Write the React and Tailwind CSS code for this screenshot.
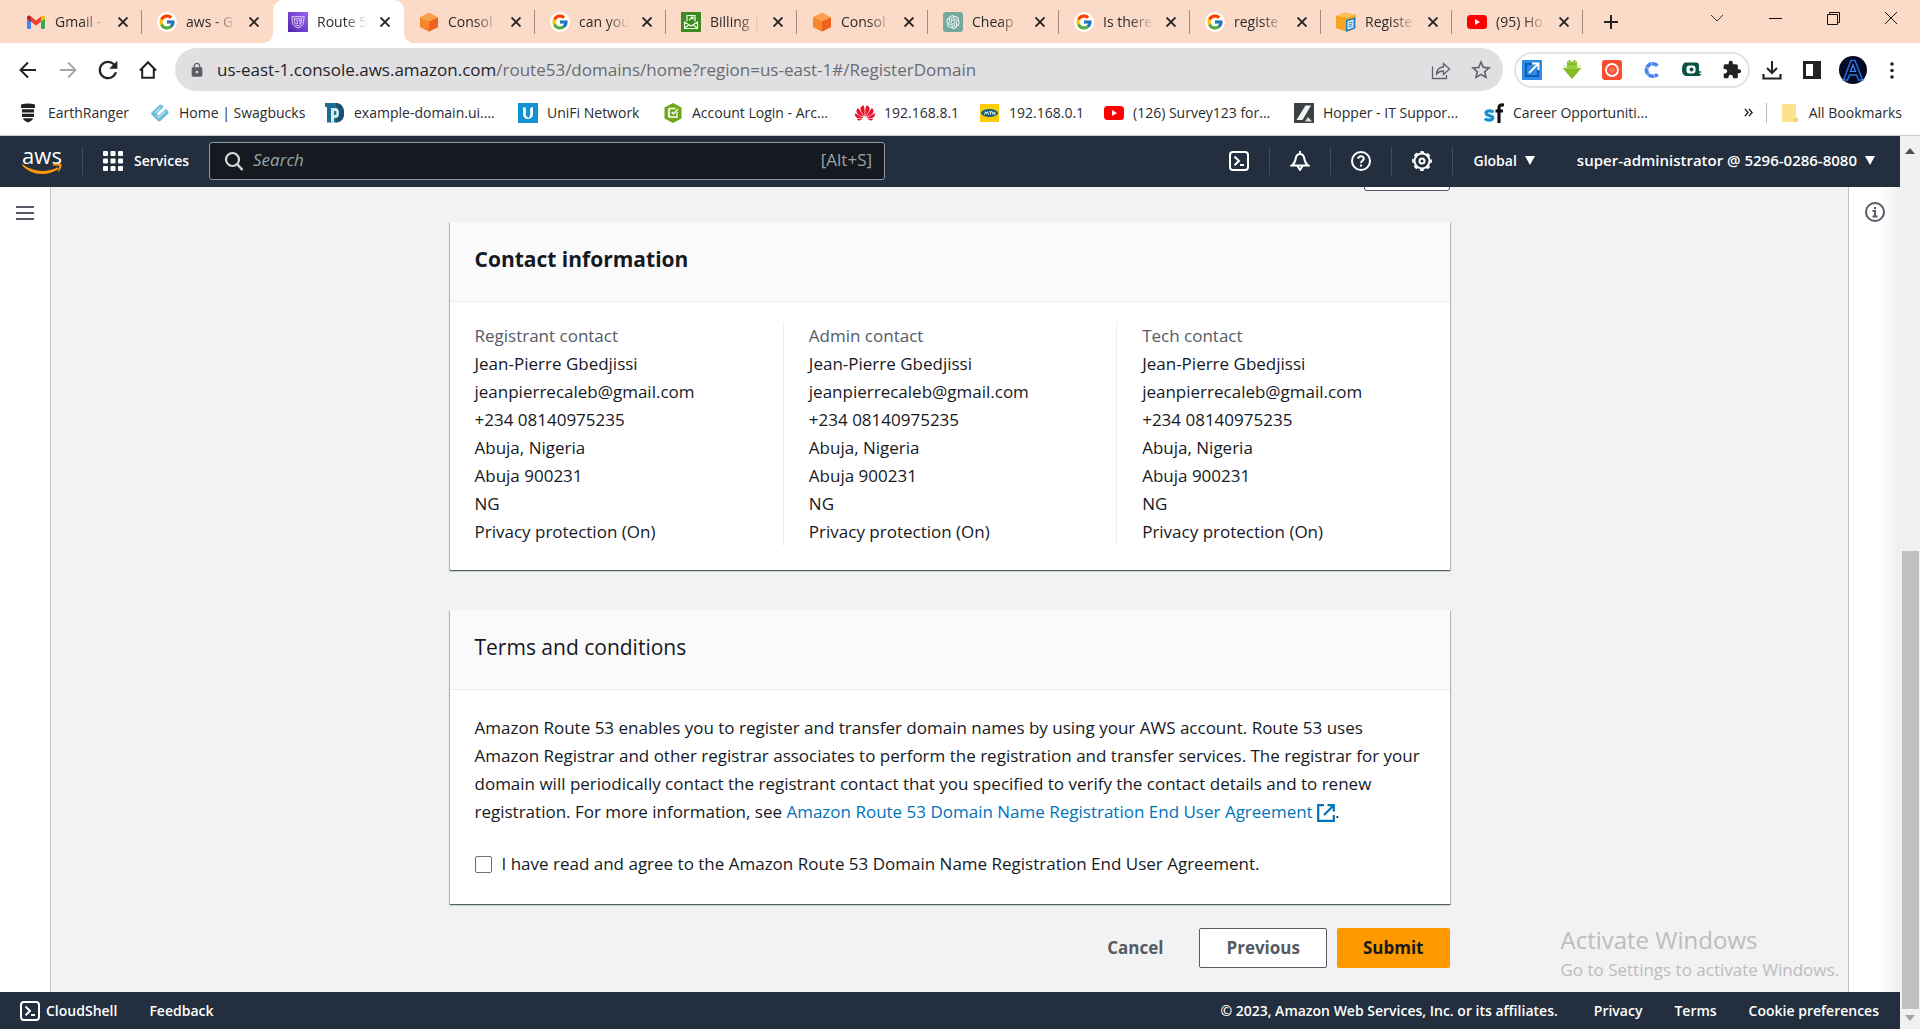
import React from "react";
import { FcGoogle } from "react-icons/fc";
import { RiOpenaiFill } from "react-icons/ri";
import { SiHuawei } from "react-icons/si";
import { MdExtension, MdLock, MdRefresh, MdStarBorder } from "react-icons/md";

/* ---------- favicons and small drawings ---------- */

function GmailIcon() {
  return (
    <svg viewBox="0 0 20 20" className="size-5">
      <path d="M1 5v10.500c0 .8.6 1.500 1.500 1.500H5V8.500z" fill="#4285f4" />
      <path d="M19 5v10.500c0 .8-.6 1.500-1.500 1.500H15V8.500z" fill="#34a853" />
      <path d="M5 4.500v5.200l5 3.800 5-3.800V4.500l-5 3.900z" fill="#ea4335" />
      <path d="M1 5.300v1.400l4 3V4.500l-.8-.6C2.800 2.900 1 3.800 1 5.300z" fill="#c5221f" />
      <path d="M19 5.300v1.400l-4 3V4.500l.8-.6c1.400-1 3.200-.1 3.200 1.400z" fill="#fbbc04" />
    </svg>
  );
}

function GoogleIcon() {
  return (
    <span className="flex size-5 items-center justify-center rounded-full bg-white">
      <FcGoogle className="size-[18px]" />
    </span>
  );
}

function RouteIcon() {
  return (
    <svg viewBox="0 0 20 20" className="size-5">
      <defs>
        <linearGradient id="route-bg" x1="0" y1="1" x2="1" y2="0">
          <stop offset="0" stopColor="#4d27a8" />
          <stop offset="1" stopColor="#9a60f5" />
        </linearGradient>
      </defs>
      <rect width="20" height="20" fill="url(#route-bg)" />
      <g fill="none" stroke="#e9dcff" strokeWidth="1">
        <path d="M4 4.500c1.500.8 2.800.6 3.800-.3L10 5l2.200-.8c1 .9 2.300 1.100 3.800.3.600 2-.6 2.800-.4 5 .2 3.500-2.600 5-5.600 6.500-3-1.500-5.800-3-5.600-6.500.2-2.200-1-3-.4-5z" />
        <path d="M6.500 6.700c2 .2 5 .2 7 0-.3 2 0 4-.6 5-.8 1-1.900 1.700-2.900 2.300-1-.6-2.100-1.300-2.900-2.300-.6-1-.3-3-.6-5z" />
        <path d="M8 8.500h1.500v3H8M11 8.500h1.500L11.500 10c1.500 0 1.200 1.700-.4 1.500" strokeWidth=".8" />
      </g>
    </svg>
  );
}

function CubeIcon() {
  return (
    <svg viewBox="0 0 20 20" className="size-5">
      <path d="M10 .8l9 4.600v9.500l-9 4.600-9-4.600V5.400z" fill="#f58536" />
      <path d="M10 .8l9 4.600-9 4.400-9-4.400z" fill="#f9a04b" />
      <path d="M10 9.800v9.700l9-4.600V5.400z" fill="#f0601f" />
      <path d="M1 5.400l9 4.400v9.700l-9-4.600z" fill="#f7872a" />
    </svg>
  );
}

function BillingIcon() {
  return (
    <svg viewBox="0 0 20 20" className="size-5">
      <rect width="20" height="20" fill="#3c8a20" />
      <g fill="none" stroke="#eaffdf" strokeWidth="1.200">
        <path d="M6 9.500V3.500h8v6M8 8l4-3M9.500 5H12v2.400" />
        <path d="M3.500 10v6.500h13V10L10 14zM3.500 16.500l4.500-4M16.500 16.500l-4.500-4" />
      </g>
    </svg>
  );
}

function ChatIcon() {
  return (
    <span className="flex size-5 items-center justify-center rounded-[3px] bg-[#75a99c] text-white">
      <RiOpenaiFill className="size-4" />
    </span>
  );
}

function RegisterIcon() {
  return (
    <svg viewBox="0 0 20 20" className="size-5">
      <path d="M0 4l9-3.500L20 3v13l-9 3.500L0 16z" fill="#f2a71b" />
      <path d="M0 4l9-3.500L20 3l-9 3z" fill="#f8c45c" />
      <path d="M11 6v13.500L0 16V4z" fill="#f5a623" />
      <path d="M10 8l9-2.500v11L10 20z" fill="#1d7fc0" />
      <path d="M11.500 9.300l6-1.700v7.800l-6 2.200z" fill="#e9f5fc" />
      <path d="M12.500 11l4-1.200M12.500 13l4-1.200M12.500 15l4-1.300" stroke="#1d7fc0" strokeWidth="1" />
    </svg>
  );
}

function YoutubeIcon() {
  return (
    <svg viewBox="0 0 20 20" className="size-5">
      <rect y="3" width="20" height="14" rx="3.500" fill="#ff0000" />
      <path d="M8 7v6l5-3z" fill="#fff" />
    </svg>
  );
}

function RangerIcon() {
  return (
    <svg viewBox="0 0 20 20" className="size-5">
      <path d="M2 1.500C7 .2 11 .2 16 1.500V5H2z" fill="#222" />
      <path d="M3 6.200h12v3.300H3zM3 10.800h12v3.300H3zM4 15.300h10c0 1.800-3 3.200-5 4.200-2-1-5-2.400-5-4.200z" fill="#222" />
    </svg>
  );
}

function SwagIcon() {
  return (
    <svg viewBox="0 0 20 20" className="size-5">
      <path d="M10 1.500L1.800 9.200c-1 1-1 1.800 0 2.700l6 5.800c1 1 2 1 3 0l7-6.700c1-1 1-2.200 0-3.200l-2-1.900-7 6.800-2.200-2.100L13.500 4l-1.500-2z" fill="#6fbdd8" />
      <path d="M5 9.800l5.500-5.200M6.500 12.500l2.300 2.200 6.500-6.200" stroke="#e9f7fb" strokeWidth="1" fill="none" />
    </svg>
  );
}

function DomainIcon() {
  return (
    <svg viewBox="0 0 20 20" className="size-5">
      <path d="M0 0h10c6 0 9 4 9 10s-3 9.500-9 9.500H2V4H0z" fill="#1c6d8f" />
      <path d="M11 0c5 0 8 4 8 10s-3 9.500-8 9.500z" fill="#175273" />
      <path d="M6 5h4.500c2.500 0 3.500 2 3.500 5s-1 5-3.500 5H9v4.500H6z" fill="#cdeef5" />
      <path d="M9 8h1.300c.7 0 1 .8 1 2s-.3 2-1 2H9z" fill="#1c6d8f" />
    </svg>
  );
}

function UnifiIcon() {
  return (
    <svg viewBox="0 0 20 20" className="size-5">
      <rect width="20" height="20" fill="#0f93d2" />
      <path d="M5 4.500h2.800V11c0 1.800.8 3 2.200 3.300V16C6.800 15.800 5 14 5 11z" fill="#fff" />
      <path d="M15 4v7c0 3-1.800 4.800-5 5-1 0-1.700-.2-2.500-.6 3 .3 4.700-1.400 4.700-4.400V5z" fill="#fff" />
    </svg>
  );
}

function SurveyIcon() {
  return (
    <svg viewBox="0 0 20 20" className="size-5">
      <path d="M10 0l8.500 4.500v11L10 20l-8.500-4.500v-11z" fill="#6fa516" />
      <path d="M14 9v5H6V5.500h6.500M4.800 7.500h2.400M4.800 10h2.400M4.800 12.500h2.400M8.800 9l1.700 2 4.500-5" stroke="#fff" strokeWidth="1.300" fill="none" />
    </svg>
  );
}

function MtnIcon() {
  return (
    <svg viewBox="0 0 20 20" className="size-5">
      <rect x="0" y="1" width="19" height="18" fill="#fdcb04" />
      <ellipse cx="9.500" cy="10" rx="8.500" ry="4" fill="#12607c" />
      <path d="M4.500 11.700l1-3 1 2 1-2 1 3M9 8.800h3M10.500 8.800v2.900M12.800 11.700v-2.900l2 2.900V8.800" stroke="#fff" strokeWidth=".9" fill="none" />
    </svg>
  );
}

function HopperIcon() {
  return (
    <svg viewBox="0 0 20 20" className="size-5">
      <rect width="20" height="20" fill="#3b4043" />
      <path d="M11.500 2.500h5.500L8.500 17H2.500z" fill="#f4f4f4" />
      <path d="M14 14l4 4.500h-7z" fill="#d9dde0" />
    </svg>
  );
}

function CareerIcon() {
  return (
    <svg viewBox="0 0 20 20" className="size-5">
      <path d="M9.500 9.200C7 7.200 2 7.500 2 10.200c0 3 6.800 1.800 6.800 4.600C8.800 17.800 3 17.700.8 15.600" fill="none" stroke="#1593cf" strokeWidth="3.200" />
      <path d="M15 20V5c0-2.600 1.500-3.500 5-3M11.500 8h7.500" fill="none" stroke="#111" strokeWidth="3.200" />
    </svg>
  );
}

function FolderIcon() {
  return (
    <svg viewBox="0 0 20 20" className="size-5">
      <path d="M2 1h14v13l2 1v4H2z" fill="#fbe38e" />
      <path d="M14 15h4v4h-5z" fill="#f3d36b" />
    </svg>
  );
}

function TerminalIcon() {
  return (
    <svg viewBox="0 0 20 20" fill="none" stroke="currentColor" strokeWidth="2" className="size-5">
      <rect x="1" y="1" width="18" height="18" rx="3" />
      <path d="M5.500 5.500L10 10l-4.500 4.200M11 14h4" />
    </svg>
  );
}

function CaretIcon() {
  return (
    <svg viewBox="0 0 10 9" className="h-[9px] w-[10px]" aria-hidden="true">
      <path d="M0 0h10L5 9z" fill="currentColor" />
    </svg>
  );
}

function CrossIcon() {
  return (
    <svg viewBox="0 0 10 10" className="size-[10px]" aria-hidden="true">
      <path d="M.5.5l9 9M9.500.5l-9 9" stroke="#222" strokeWidth="1.900" />
    </svg>
  );
}

/* ---------- browser chrome ---------- */

const tabs = [
  { title: "Gmail -", icon: <GmailIcon /> },
  { title: "aws - G", icon: <GoogleIcon />, bare: true },
  { title: "Route 5", icon: <RouteIcon />, active: true },
  { title: "Consol", icon: <CubeIcon /> },
  { title: "can you", icon: <GoogleIcon /> },
  { title: "Billing |", icon: <BillingIcon /> },
  { title: "Consol", icon: <CubeIcon /> },
  { title: "Cheap", icon: <ChatIcon /> },
  { title: "Is there", icon: <GoogleIcon /> },
  { title: "registe", icon: <GoogleIcon /> },
  { title: "Registe", icon: <RegisterIcon /> },
  { title: "(95) Ho", icon: <YoutubeIcon /> },
];

function Tab({ tab }) {
  return (
    <div
      role="tab"
      aria-selected={!!tab.active}
      className={
        tab.active
          ? "relative flex w-[131px] shrink-0 items-center rounded-t-[10px] bg-white pl-[15px]"
          : "relative flex w-[131px] shrink-0 items-center pl-[15px]"
      }
    >
      {tab.active && (
        <>
          <span className="absolute bottom-0 -left-[10px] size-[10px] bg-[radial-gradient(circle_at_top_left,#fcdac8_10px,#fff_10px)]" />
          <span className="absolute -right-[10px] bottom-0 size-[10px] bg-[radial-gradient(circle_at_top_right,#fcdac8_10px,#fff_10px)]" />
        </>
      )}
      {tab.icon}
      <span className="ml-[9px] w-[50px] overflow-hidden text-sm whitespace-nowrap text-[#2c2a29] [mask-image:linear-gradient(to_right,black_55%,transparent)]">
        {tab.title}
      </span>
      <button aria-label="Close tab" className="ml-[13px]">
        <CrossIcon />
      </button>
      {!tab.active && !tab.bare && <span className="absolute right-0 h-6 w-px bg-[#a08b80]" />}
    </div>
  );
}

function TabStrip() {
  return (
    <div className="flex h-[43px] shrink-0 bg-[#fcdac8] pl-[11px]">
      <div role="tablist" className="flex">
        {tabs.map((tab, i) => (
          <Tab key={i} tab={tab} />
        ))}
      </div>
      <button aria-label="New tab" className="ml-5">
        <svg viewBox="0 0 16 16" className="size-4">
          <path d="M8 1v14M1 8h14" stroke="#222" strokeWidth="2" />
        </svg>
      </button>
      <div className="ml-auto flex h-9 items-center gap-10 pr-5">
        <button aria-label="Search tabs">
          <svg viewBox="0 0 18 18" className="size-[18px]">
            <path d="M3 6l6 6 6-6" fill="none" stroke="#333" />
          </svg>
        </button>
        <button aria-label="Minimize">
          <svg viewBox="0 0 18 18" className="size-[18px]">
            <path d="M3 9.500h13" stroke="#111" />
          </svg>
        </button>
        <button aria-label="Restore">
          <svg viewBox="0 0 18 18" className="size-[18px]">
            <path d="M3.500 5.500h10v10h-10zM5.500 5.500v-2h10v10h-2" fill="none" stroke="#111" />
          </svg>
        </button>
        <button aria-label="Close">
          <svg viewBox="0 0 18 18" className="size-[18px]">
            <path d="M3 3l12 12M15 3L3 15" stroke="#111" />
          </svg>
        </button>
      </div>
    </div>
  );
}

const extensions = [
  {
    name: "Open in new window",
    icon: (
      <svg viewBox="0 0 20 20" className="size-5">
        <rect width="20" height="20" rx="1" fill="#2f8ae8" />
        <path d="M4 4h6M4 3v13h12v-6" fill="none" stroke="#0f5cae" strokeWidth="2" />
        <path d="M7 13l9-9M10 3.500h6.500V10" fill="none" stroke="#fff" strokeWidth="1.800" />
      </svg>
    ),
  },
  {
    name: "Downloader",
    icon: (
      <svg viewBox="0 0 20 20" className="size-5">
        <path d="M5 1l1.500 2V0h2v3L10 1l1.500 2V0h2v3L15 1v7h4.500L10 19 .5 8H5z" fill="#82bc22" />
        <path d="M1 6h18M2 8h16" stroke="#b7e06c" strokeWidth=".8" />
      </svg>
    ),
  },
  {
    name: "Recorder",
    icon: (
      <svg viewBox="0 0 20 20" className="size-5">
        <rect width="20" height="20" rx="3" fill="#fb4c30" />
        <circle cx="10" cy="10" r="6" fill="none" stroke="#fff" strokeWidth="1.800" />
        <circle cx="10" cy="10" r="3" fill="#fff" opacity=".2" />
      </svg>
    ),
  },
  {
    name: "Clipboard",
    icon: (
      <svg viewBox="0 0 20 20" className="size-5">
        <path d="M15.500 5.800A6.300 6.300 0 1 0 15.500 14.200" fill="none" stroke="#4a86f0" strokeWidth="3.600" strokeDasharray="6 .5" />
      </svg>
    ),
  },
  {
    name: "Chameleon",
    icon: (
      <svg viewBox="0 0 20 20" className="size-5">
        <path d="M2.500 2.500H14c2 0 3 1 3 3V11l3 1-3 1 2.500 2-3 1H5C1.500 16 0 13.500 0 9.500 0 6 1 4 2.500 2.500z" fill="#0b5345" />
        <rect x="4.500" y="5.500" width="9" height="8" rx="3" fill="#fff" />
        <circle cx="9.500" cy="9.500" r="2" fill="#0b5345" />
      </svg>
    ),
  },
  { name: "Extensions", icon: <MdExtension className="size-[22px] text-[#222]" /> },
];

function Toolbar() {
  return (
    <div className="flex h-[53px] shrink-0 items-center bg-white pr-[18px] pl-[18px]">
      <div className="flex w-[157px] items-center gap-5">
        <button aria-label="Back">
          <svg viewBox="0 0 20 20" className="size-5">
            <path d="M18 10H3M10 2.500L2.500 10l7.500 7.500" fill="none" stroke="#222" strokeWidth="2" />
          </svg>
        </button>
        <button aria-label="Forward">
          <svg viewBox="0 0 20 20" className="size-5">
            <path d="M2 10h15M10 2.500l7.500 7.500-7.500 7.500" fill="none" stroke="#a5a5a5" strokeWidth="1.800" />
          </svg>
        </button>
        <button aria-label="Reload" className="-mx-1">
          <MdRefresh className="size-7 text-[#222]" />
        </button>
        <button aria-label="Home">
          <svg viewBox="0 0 20 20" className="size-5">
            <path d="M4.200 9v8.800h11.600V9M2 10.500l8-8.300 8 8.300" fill="none" stroke="#222" strokeWidth="2" />
          </svg>
        </button>
      </div>
      <div className="flex h-[43px] min-w-0 flex-1 items-center rounded-full bg-[#e0e0e3] pr-[10px] pl-[14px]">
        <MdLock className="size-4 shrink-0 text-[#5c5e62]" />
        <div className="ml-3 truncate text-[17px] text-[#6a6b6f]">
          <span className="text-[#242528]">us-east-1.console.aws.amazon.com</span>/route53/domains/home?region=us-east-1#/RegisterDomain
        </div>
        <button aria-label="Share" className="ml-auto">
          <svg viewBox="0 0 20 20" className="size-5">
            <path d="M1.500 6.500v12h14v-3.500M5.500 14c.5-4.500 3-7 7-7V3.500L18.500 9l-6 5.500V11c-3 0-5 .8-7 3z" fill="none" stroke="#5f6368" strokeWidth="1.300" />
          </svg>
        </button>
        <button aria-label="Bookmark this page" className="ml-[18px]">
          <MdStarBorder className="size-6 text-[#5f6368]" />
        </button>
      </div>
      <div className="ml-[11px] flex h-9 items-center gap-5 rounded-full border-2 border-[#e3e4e6] px-4">
        {extensions.map((ext) => (
          <button key={ext.name} aria-label={ext.name} className="flex size-5 items-center justify-center first:-ml-[10px] last:-mr-[10px]">
            {ext.icon}
          </button>
        ))}
      </div>
      <button aria-label="Downloads" className="ml-3">
        <svg viewBox="0 0 20 20" className="size-5">
          <path d="M10 1v12M5 8l5 5 5-5" fill="none" stroke="#222" strokeWidth="2" />
          <path d="M1.500 14v4.500h17V14" fill="none" stroke="#222" strokeWidth="2.200" />
        </svg>
      </button>
      <button aria-label="Side panel" className="ml-5">
        <svg viewBox="0 0 20 20" className="size-5">
          <rect x="1" y="1" width="18" height="18" fill="#222" />
          <rect x="4" y="4" width="7" height="12" fill="#fff" />
        </svg>
      </button>
      <button aria-label="Profile" className="ml-[17px]">
        <svg viewBox="0 0 28 28" className="size-7">
          <circle cx="14" cy="14" r="14" fill="#050a24" />
          <path d="M4.500 24L12 4.500h4L23.500 24h-4l-2-5h-7l-2 5z" fill="none" stroke="#1f6fe0" strokeWidth="1.500" />
          <path d="M11.500 15.500h5L14 9z" fill="none" stroke="#3f90f4" strokeWidth="1.200" />
        </svg>
      </button>
      <button aria-label="Menu" className="ml-[15px]">
        <svg viewBox="0 0 20 20" className="size-5">
          <g fill="#222">
            <circle cx="10" cy="4" r="1.800" />
            <circle cx="10" cy="10.500" r="1.800" />
            <circle cx="10" cy="17" r="1.800" />
          </g>
        </svg>
      </button>
    </div>
  );
}

const bookmarks = [
  { text: "EarthRanger", icon: <RangerIcon />, width: "w-[102px]" },
  { text: "Home | Swagbucks", icon: <SwagIcon />, width: "w-[146px]" },
  { text: "example-domain.ui....", icon: <DomainIcon />, width: "w-[164px]" },
  { text: "UniFi Network", icon: <UnifiIcon />, width: "w-[116px]" },
  { text: "Account Login - Arc...", icon: <SurveyIcon />, width: "w-[163px]" },
  { text: "192.168.8.1", icon: <SiHuawei className="size-5 text-[#e8132b]" />, width: "w-[96px]" },
  { text: "192.168.0.1", icon: <MtnIcon />, width: "w-[95px]" },
  { text: "(126) Survey123 for...", icon: <YoutubeIcon />, width: "w-[161px]" },
  { text: "Hopper - IT Suppor...", icon: <HopperIcon />, width: "w-[161px]" },
  { text: "Career Opportuniti...", icon: <CareerIcon />, width: "w-[161px]" },
];

function BookmarkBar() {
  return (
    <div className="flex h-10 shrink-0 items-center overflow-hidden border-b border-[#c9cdd2] bg-white pr-[18px] pb-[6px] pl-[19px] text-sm text-[#2b2c2e]">
      {bookmarks.map((b) => (
        <a key={b.text} href="#" className="flex shrink-0 items-center">
          {b.icon}
          <span className={"ml-[9px] whitespace-nowrap " + b.width}>{b.text}</span>
        </a>
      ))}
      <button aria-label="More bookmarks" className="ml-auto">
        <svg viewBox="0 0 10 10" className="size-[9px]">
          <path d="M1 1l3.500 4L1 9M5.500 1L9 5 5.500 9" fill="none" stroke="#222" strokeWidth="1.600" />
        </svg>
      </button>
      <span className="mx-[13px] h-5 w-px bg-[#b9bcc0]" />
      <button className="flex shrink-0 items-center gap-[9px]">
        <FolderIcon />
        All Bookmarks
      </button>
    </div>
  );
}

/* ---------- console ---------- */

function Divider() {
  return <span className="h-7 w-px shrink-0 bg-[#414d5c]" />;
}

function ConsoleHeader() {
  return (
    <header className="flex h-[51px] shrink-0 items-center bg-[#232f3e] pb-[2px] pl-[22px] text-sm font-semibold text-white">
      <a href="#" aria-label="AWS home" className="flex w-10 shrink-0 flex-col items-center">
        <span className="text-[22px] leading-4 font-medium">aws</span>
        <svg viewBox="0 0 40 12" className="h-3 w-10">
          <path d="M0 1c12 8.500 25 9 35.500 3.200l1.300 1.500C26 13.500 9 13 0 2.300z" fill="#ff9900" />
          <path d="M30.500 1.800C34 .3 38.500.2 39.300 1c.8 1-.3 5.500-2.800 7.500-.8.500-.8-.1-.5-.8.800-1.700 1.500-3.900 1-4.700-.5-.6-3.200-.6-5.500-.3-.9 0-1.600-.600-1-.9z" fill="#ff9900" />
        </svg>
      </a>
      <span className="ml-5 flex shrink-0 items-center gap-5">
        <Divider />
        <button className="flex items-center gap-[11px]">
          <svg viewBox="0 0 20 20" className="size-5" fill="currentColor">
            {[0, 7.5, 15].map((y) => [0, 7.5, 15].map((x) => <rect key={x + "-" + y} x={x} y={y} width="5" height="5" rx="1" />))}
          </svg>
          Services
        </button>
      </span>
      <div className="ml-5 flex h-[38px] w-[676px] min-w-0 items-center rounded-[3px] border border-[#8d9ba5] bg-[#16191f] pr-3 pl-[14px]">
        <svg viewBox="0 0 20 20" className="size-5 shrink-0">
          <circle cx="8.500" cy="8.500" r="6.500" fill="none" stroke="#d5dbdb" strokeWidth="2.200" />
          <path d="M13 13l5.500 6" stroke="#d5dbdb" strokeWidth="2.500" />
        </svg>
        <input
          type="search"
          aria-label="Search"
          placeholder="Search"
          className="ml-[9px] min-w-0 flex-1 bg-transparent text-[17px] font-normal outline-none placeholder:text-[#95a5a6] placeholder:italic"
        />
        <span className="text-[17px] font-normal text-[#95a5a6]">[Alt+S]</span>
      </div>
      <div className="ml-auto flex shrink-0 items-center gap-5 pr-[25px]">
        <button aria-label="CloudShell">
          <TerminalIcon />
        </button>
        <Divider />
        <button aria-label="Notifications">
          <svg viewBox="0 0 20 20" className="size-5" fill="none" stroke="currentColor" strokeWidth="2">
            <path d="M1.800 14.500h16.400c-2.800-2-3.400-3.500-3.800-6.500C14 5 12.500 3 10 3S6 5 5.600 8c-.4 3-1 4.500-3.800 6.500zM7.500 15l2.500 4 2.500-4M10 0v3" />
          </svg>
        </button>
        <Divider />
        <button aria-label="Support">
          <svg viewBox="0 0 20 20" className="size-5" fill="none" stroke="currentColor" strokeWidth="2">
            <circle cx="10" cy="10" r="9" />
            <path d="M7.200 7.800C7.200 4.400 12.800 4.400 12.800 7.600c0 2-2.800 2.200-2.800 4.400M10 13.500v2" />
          </svg>
        </button>
        <Divider />
        <button aria-label="Settings">
          <svg viewBox="0 0 20 20" className="size-5" fill="none" stroke="currentColor">
            <circle cx="10" cy="10" r="7.500" strokeWidth="2" />
            <circle cx="10" cy="10" r="9" strokeWidth="1.800" strokeDasharray="3.800 3.268" strokeDashoffset="1.900" />
            <circle cx="10" cy="10" r="2.500" strokeWidth="2" />
          </svg>
        </button>
        <Divider />
        <button className="flex items-center gap-2">
          Global <CaretIcon />
        </button>
        <span className="ml-[2px]">
          <Divider />
        </span>
        <button className="flex items-center gap-2 text-[15px]">
          super-administrator @ 5296-0286-8080 <CaretIcon />
        </button>
      </div>
    </header>
  );
}

function Card({ title, bold, children }) {
  return (
    <section className="bg-white shadow-[0_1px_1px_0_rgba(0,28,36,0.5),1px_1px_1px_0_rgba(0,28,36,0.2),-1px_1px_1px_0_rgba(0,28,36,0.2)]">
      <div className="border-b border-[#eaeded] bg-[#fafafa] px-[25px] pt-[23px] pb-7">
        <h2
          className={
            bold ? "text-[21px] leading-7 font-bold text-[#16191f]" : "text-[21px] leading-7 text-[#16191f]"
          }
        >
          {title}
        </h2>
      </div>
      {children}
    </section>
  );
}

const contactLines = [
  "Jean-Pierre Gbedjissi",
  "jeanpierrecaleb@gmail.com",
  "+234 08140975235",
  "Abuja, Nigeria",
  "Abuja 900231",
  "NG",
  "Privacy protection (On)",
];

function ContactColumn({ title, first }) {
  return (
    <div className={first ? "px-[25px]" : "border-l border-[#eaeded] px-[25px]"}>
      <h3 className="text-[#545b64]">{title}</h3>
      {contactLines.map((line) => (
        <div key={line}>{line}</div>
      ))}
    </div>
  );
}

function ExternalIcon() {
  return (
    <svg viewBox="0 0 18 18" className="inline size-[18px]" aria-hidden="true">
      <path d="M7 1.200H1.200v15.600h15.600V11M10.500 1.200h6.300v6.300M16.500 1.500L7 11" fill="none" stroke="#0073bb" strokeWidth="2.200" />
    </svg>
  );
}

function RegisterDomain() {
  return (
    <div className="mx-auto flex w-full max-w-[1000px] flex-col pb-6 text-[17px] leading-7 text-[#16191f]">
      <button aria-label="Edit" className="mb-[31px] h-10 w-[86px] self-end rounded-[3px] border border-[#545b64] bg-white" />

      <Card title="Contact information" bold>
        <div className="grid grid-cols-3 pt-5 pb-6">
          {["Registrant contact", "Admin contact", "Tech contact"].map((title, i) => (
            <ContactColumn key={title} title={title} first={i === 0} />
          ))}
        </div>
      </Card>

      <div className="mt-10">
        <Card title="Terms and conditions">
          <div className="px-[25px] pt-6 pb-[26px]">
            <p>
              Amazon Route 53 enables you to register and transfer domain names by using your AWS account. Route 53 uses
              Amazon Registrar and other registrar associates to perform the registration and transfer services. The
              registrar for your domain will periodically contact the registrant contact that you specified to verify the
              contact details and to renew registration. For more information, see{" "}
              <a href="#" className="text-[#0073bb]">
                Amazon Route 53 Domain Name Registration End User Agreement <ExternalIcon />
              </a>
              .
            </p>
            <label className="mt-6 flex items-center gap-[10px]">
              <input type="checkbox" className="size-[17px] appearance-none rounded-[2px] border border-[#687078] bg-white" />
              I have read and agree to the Amazon Route 53 Domain Name Registration End User Agreement.
            </label>
          </div>
        </Card>
      </div>

      <div className="mt-6 flex justify-end gap-[10px] font-bold">
        <button className="h-10 px-[26px] text-[#545b64]">Cancel</button>
        <button className="h-10 rounded-[2px] border border-[#545b64] bg-white px-[26px] text-[#545b64]">Previous</button>
        <button className="h-10 rounded-[2px] bg-[#ff9900] px-[26px] text-[#16191f]">Submit</button>
      </div>
    </div>
  );
}

function ConsoleFooter() {
  return (
    <footer className="flex h-[37px] shrink-0 items-center bg-[#232f3e] pr-[21px] pl-5 text-sm font-semibold text-white">
      <button className="flex items-center gap-[6px]">
        <TerminalIcon />
        CloudShell
      </button>
      <a href="#" className="ml-8">
        Feedback
      </a>
      <span className="ml-auto">© 2023, Amazon Web Services, Inc. or its affiliates.</span>
      <a href="#" className="ml-9">
        Privacy
      </a>
      <a href="#" className="ml-8">
        Terms
      </a>
      <a href="#" className="ml-8">
        Cookie preferences
      </a>
    </footer>
  );
}

export default function App() {
  return (
    <div className="flex h-screen flex-col overflow-hidden bg-white font-['Open_Sans','Noto_Sans',sans-serif]">
      <TabStrip />
      <Toolbar />
      <BookmarkBar />
      <div className="flex min-h-0 flex-1">
        <div className="flex min-w-0 flex-1 flex-col">
          <ConsoleHeader />
          <div className="flex min-h-0 flex-1">
            <nav className="flex w-[51px] shrink-0 justify-center border-r border-[#c0c4c7] bg-white pt-4">
              <button aria-label="Open navigation" className="h-5">
                <svg viewBox="0 0 18 16" className="h-4 w-[18px]">
                  <path d="M0 2h18M0 8h18M0 14h18" stroke="#545b64" strokeWidth="2" />
                </svg>
              </button>
            </nav>
            <main className="relative flex min-w-0 flex-1 flex-col justify-end overflow-hidden bg-[#f2f2f2]">
              <RegisterDomain />
              <div className="absolute right-[9px] bottom-2 leading-7 text-[#bcbdbd]">
                <div className="text-2xl">Activate Windows</div>
                <div className="text-[17px] leading-7">Go to Settings to activate Windows.</div>
              </div>
            </main>
            <aside className="flex w-[52px] shrink-0 justify-center border-l border-[#c0c4c7] bg-linear-to-r from-white from-60% to-[#eeeeee] pt-[15px]">
              <button aria-label="Info" className="h-5">
                <svg viewBox="0 0 20 20" className="size-5" fill="none" stroke="#545b64" strokeWidth="2">
                  <circle cx="10" cy="10" r="9" />
                  <path d="M7.500 9H10v5M7.500 14.500h5M9 6h2" />
                </svg>
              </button>
            </aside>
          </div>
          <ConsoleFooter />
        </div>
        <div className="flex w-5 shrink-0 flex-col items-center bg-[#f1f1f1] py-2">
          <svg viewBox="0 0 10 6" className="mt-1 h-[6px] w-[10px]">
            <path d="M0 6h10L5 0z" fill="#505050" />
          </svg>
          <div className="flex-[394]" />
          <div className="w-[17px] flex-[455] bg-[#c1c1c1]" />
          <svg viewBox="0 0 10 6" className="mt-[6px] h-[6px] w-[10px]">
            <path d="M0 0h10L5 6z" fill="#a3a3a3" />
          </svg>
        </div>
      </div>
    </div>
  );
}
